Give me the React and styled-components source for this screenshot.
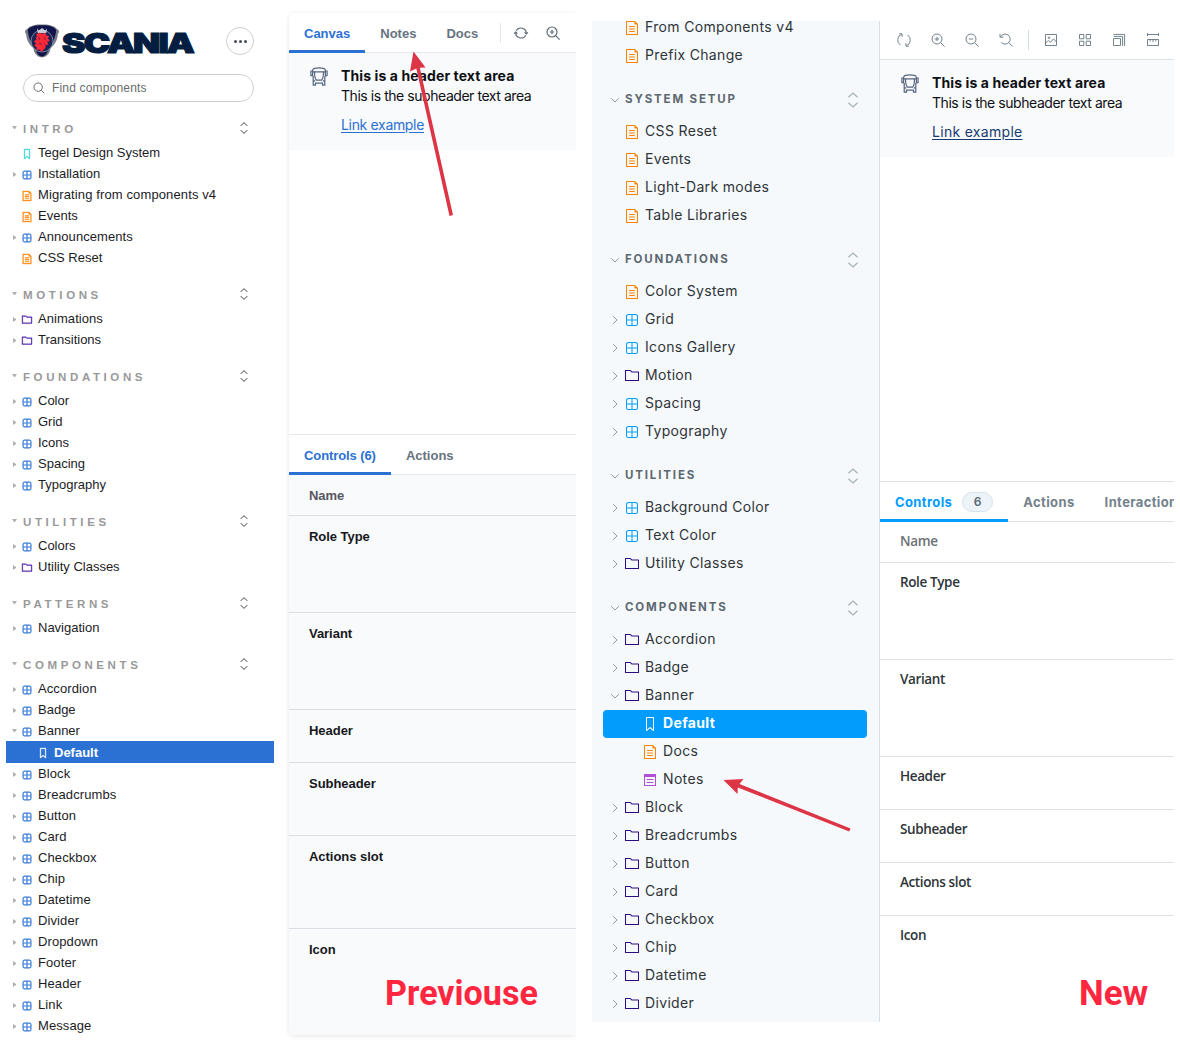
import React from "react";
import styled, { createGlobalStyle, css } from "styled-components";

const Global = createGlobalStyle`
  * { box-sizing: border-box; }
  body { margin: 0; background: #fff; }
`;

const helvetica = `"Liberation Sans", Arial, sans-serif`;
const grotesk = `Inter, "Liberation Sans", sans-serif`;
const humanist = `"Open Sans", "Noto Sans", sans-serif`;

/* ---------- page ---------- */
const Page = styled.main`
  position: relative;
  display: flex;
  width: 1180px;
  height: 1044px;
  overflow: hidden;
  background: #fff;
`;

/* ---------- icons ---------- */
const Glyph = styled.svg`
  display: block;
  flex: none;
  overflow: visible;
`;

const filled = {
  component:
    "M3.5 1.004a2.5 2.5 0 00-2.5 2.5v7a2.5 2.5 0 002.5 2.5h7a2.5 2.5 0 002.5-2.5v-7a2.5 2.5 0 00-2.5-2.5h-7zm8.5 5.5H7.5v-4.5h3a1.5 1.5 0 011.5 1.5v3zm0 1v3a1.5 1.5 0 01-1.5 1.5h-3v-4.5H12zm-5.5 4.5v-4.5H2v3a1.5 1.5 0 001.5 1.5h3zM2 6.504h4.5v-4.5h-3a1.5 1.5 0 00-1.5 1.5v3z",
  document:
    "M4 5.5a.5.5 0 01.5-.5h5a.5.5 0 010 1h-5a.5.5 0 01-.5-.5zM4.5 7.5a.5.5 0 000 1h5a.5.5 0 000-1h-5zM4 10.5a.5.5 0 01.5-.5h5a.5.5 0 010 1h-5a.5.5 0 01-.5-.5zM1.5 0a.5.5 0 00-.5.5v13a.5.5 0 00.5.5h11a.5.5 0 00.5-.5V3.207a.5.5 0 00-.146-.353L10.146.146A.5.5 0 009.793 0H1.5zM2 1h7.5v2a.5.5 0 00.5.5h2V13H2V1z",
  folder:
    "M6.586 3.504l-1.5-1.5H1v9h12v-7.5H6.586zm.414-1L5.793 1.297a1 1 0 00-.707-.293H.5a.5.5 0 00-.5.5v10a.5.5 0 00.5.5h13a.5.5 0 00.5-.5v-8.5a.5.5 0 00-.5-.5H7z",
  bookmark:
    "M3.5 0h7a.5.5 0 01.5.5v13a.5.5 0 01-.454.498.462.462 0 01-.371-.118L7 11.159l-3.175 2.72a.46.46 0 01-.379.118A.5.5 0 013 13.5V.5a.5.5 0 01.5-.5zM4 12.413l2.664-2.284a.454.454 0 01.377-.128.498.498 0 01.284.12L10 12.412V1H4v11.413z",
  notes:
    "M1.5 1a.5.5 0 00-.5.5v11a.5.5 0 00.5.5h11a.5.5 0 00.5-.5v-11a.5.5 0 00-.5-.5h-11zM2 4h10v8H2V4zM4 6h6a.5.5 0 010 1H4a.5.5 0 010-1zM4 9h6a.5.5 0 010 1H4a.5.5 0 010-1z",
};

const TreeIcon = ({ kind, size, color, weight = 0 }) => (
  <Glyph width={size} height={size} viewBox="0 0 14 14" fill={color} stroke={weight ? color : "none"} strokeWidth={weight}>
    <path fillRule="evenodd" d={filled[kind]} />
  </Glyph>
);

const stroked = {
  sync: (
    <>
      <path d="M2.2 4.800A5.400 5.400 0 0 1 12.300 7.600M11.800 9.200A5.400 5.400 0 0 1 1.700 6.400" />
      <path d="M.1 7.700 1.700 6l1.700 1.700M10.600 6.300 12.300 8l1.600-1.700" />
    </>
  ),
  remount: (
    <>
      <path d="M4.7 1.2A6.1 6.1 0 0 0 3.6 12.1M9.3 12.8A6.1 6.1 0 0 0 10.4 1.9" />
      <path d="M2.2.8h2.9v3.1M11.8 13.2H8.9v-3.1" />
    </>
  ),
  zoomIn: (
    <>
      <circle cx="6" cy="6" r="5" />
      <path d="m9.7 9.7 3.9 3.9M6 3.8v4.4M3.8 6h4.4" />
    </>
  ),
  zoomOut: (
    <>
      <circle cx="6" cy="6" r="5" />
      <path d="m9.7 9.7 3.9 3.9M3.8 6h4.4" />
    </>
  ),
  zoomReset: (
    <>
      <path d="M1.7 3.8A5 5 0 1 1 2.4 9.4M9.9 9.7l3.7 3.7" />
      <path d="M1 .8v3.4h3.4" />
    </>
  ),
  photo: (
    <>
      <path d="M1.5 1.5h11v11h-11zM1.5 10.2 4.3 7.4l2 2 3.2-3.5 3 3.1" />
      <circle cx="5" cy="4.7" r=".8" />
    </>
  ),
  grid: <path d="M1.5 1.5h4.3v4.3H1.5zM8.2 1.5h4.3v4.3H8.2zM1.5 8.2h4.3v4.3H1.5zM8.2 8.2h4.3v4.3H8.2z" />,
  grow: <path d="M1.5 5.5h7v7h-7zM1.5 3.4h9.1v9.6M1.5 1.4h11.1V13" />,
  measure: <path d="M1.5 0v3M12.5 0v3M1.5 1.5h11M1.5 6.5h11v6h-11zM4.2 6.5v1.9M7 6.5v2.6M9.8 6.5v1.9" />,
  search: (
    <>
      <circle cx="6" cy="6" r="4.9" />
      <path d="m9.6 9.6 3.6 3.6" />
    </>
  ),
  down: <path d="M3.2 5.2 7 9l3.8-3.8" />,
  right: <path d="M5.2 3.2 9 7l-3.8 3.8" />,
  expand: <path d="M3 4.6 7 .9l4 3.7M3 9.4l4 3.7 4-3.7" />,
};

const LineIcon = ({ kind, size = 14, color = "#73828c", weight = 1 }) => (
  <Glyph width={size} height={size} viewBox="0 0 14 14" fill="none" stroke={color} strokeWidth={weight}>
    {stroked[kind]}
  </Glyph>
);

const BusIcon = () => (
  <Glyph width="18" height="20" viewBox="0 0 18 20" fill="none" stroke="#56657f" strokeWidth="1.2">
    <path d="M2.600 9V3.400Q2.900 1.600 4.600 1.300 9 .6 13.400 1.300 15.100 1.600 15.400 3.400V9M2.600 4.800h12.800" />
    <path d="M2.600 4H.9v4.300l1.700.8M15.400 4h1.700v4.300l-1.700.8" />
    <path d="M4.500 4.800c0 5.200 1 7.700 2.100 8.400h4.800c1.100-.7 2.100-3.200 2.100-8.400" />
    <path d="M3.200 9v9.200h2.300v-2h7v2h2.300V9M3.200 13.600l2.100.6M14.800 13.600l-2.100.6" />
  </Glyph>
);

/* ---------- previous sidebar ---------- */
const OldSidebar = styled.aside`
  width: 289px;
  flex: none;
  padding: 24px 15px 0 6px;
  font-family: ${helvetica};
`;
const BrandRow = styled.header`
  display: flex;
  align-items: center;
  justify-content: space-between;
  height: 34px;
  padding: 0 20px 0 18px;
`;
const MenuButton = styled.button`
  display: flex;
  align-items: center;
  justify-content: center;
  gap: 2px;
  width: 28px;
  height: 28px;
  padding: 0;
  border: 1px solid #cfcfcf;
  border-radius: 50%;
  background: #fff;
`;
const Dot = styled.i`
  width: 3px;
  height: 3px;
  border-radius: 50%;
  background: #454b52;
`;
const SearchBox = styled.div`
  display: flex;
  align-items: center;
  gap: 7px;
  height: 28px;
  margin: 16px 20px 13px 17px;
  padding: 0 9px;
  border: 1px solid #cfcfcf;
  border-radius: 14px;
  color: #6b6b6b;
  font-size: 12px;
  letter-spacing: 0.18px;
`;
const OldHeading = styled.div`
  display: flex;
  align-items: center;
  height: 27px;
  margin-top: ${(p) => (p.$first ? 0 : 13)}px;
  padding: 0 24px 0 6px;
  color: #999;
  font-size: 11.5px;
  font-weight: 700;
  letter-spacing: 3.6px;
`;
const HeadingText = styled.span`
  flex: 1;
`;
const HeadingAction = styled.span`
  padding-bottom: 2px;
`;
const OldRow = styled.div`
  display: flex;
  align-items: center;
  height: ${(p) => (p.$active ? 22 : 21)}px;
  padding-left: ${(p) => (p.$active ? 32 : 6)}px;
  font-size: 13px;
  letter-spacing: ${(p) => p.$ls || 0}px;
  white-space: nowrap;
  color: #1b1c1f;
  ${(p) => p.$active && css`
    background: #2b71d4;
    color: #fff;
    font-weight: 700;
  `}
`;
const Caret = styled.span`
  width: 5px;
  height: 5px;
  margin-right: ${(p) => (p.$wide ? 6 : 5)}px;
  margin-top: ${(p) => (p.$wide ? 0 : 2)}px;
  ${(p) => p.$dir === "right" && css`
    border-left: 3px solid #b0b0b0;
    border-top: 2.5px solid transparent;
    border-bottom: 2.5px solid transparent;
    transform: translateX(1px);
  `}
  ${(p) => p.$dir === "down" && css`
    border-top: 3px solid #b0b0b0;
    border-left: 2.5px solid transparent;
    border-right: 2.5px solid transparent;
  `}
`;
const OldIconSlot = styled.span`
  display: flex;
  width: 10px;
  margin: 2px 6px 0 0;
`;

const oldTree = [
  ["INTRO", [
    ["Tegel Design System", "bookmark"],
    ["Installation", "component"],
    ["Migrating from components v4", "document", null, 0.12],
    ["Events", "document"],
    ["Announcements", "component", null, 0.06],
    ["CSS Reset", "document"],
  ]],
  ["MOTIONS", [["Animations", "folder", null, 0.06], ["Transitions", "folder"]]],
  ["FOUNDATIONS", ["Color", "Grid", "Icons", "Spacing", "Typography"].map((n) => [n, "component"])],
  ["UTILITIES", [["Colors", "component"], ["Utility Classes", "folder"]]],
  ["PATTERNS", [["Navigation", "component"]]],
  ["COMPONENTS", [
    ["Accordion", "component", null, 0.1],
    ["Badge", "component"],
    ["Banner", "component", "open"],
    ["Default", "bookmark", "active"],
    ...["Block", "Breadcrumbs", "Button", "Card", "Checkbox", "Chip", "Datetime", "Divider", "Dropdown", "Footer", "Header", "Link", "Message"].map((n) => [n, "component", null, 0.1]),
  ]],
];
const oldColors = { bookmark: "#37d5d3", component: "#2b71d4", document: "#ff8300", folder: "#4a1fa8" };

const OldItem = ({ item: [label, kind, state, spacing] }) => {
  const active = state === "active";
  const branch = kind === "component" || kind === "folder";
  return (
    <OldRow $active={active} $ls={spacing}>
      {!active && <Caret $dir={branch ? (state === "open" ? "down" : "right") : null} />}
      <OldIconSlot>
        <TreeIcon kind={kind} size={10} weight={0.5} color={active ? "#fff" : oldColors[kind]} />
      </OldIconSlot>
      {label}
    </OldRow>
  );
};

const Logo = () => (
  <Glyph width="170" height="34" viewBox="0 0 170 34">
    <path d="M18 .5C26 .3 31.500 2.500 33 5.200c2.200.4 2.600 3 .9 4.800-.4 6.500-3.400 11-7.400 14.300-.4 4.500-3 8.700-8.500 9.200-5.500-.5-8.100-4.700-8.500-9.200C5.500 21 2.500 16.500 2.100 10 .4 8.200.8 5.600 3 5.200 4.500 2.500 10 .3 18 .5Z" fill="#777b86" />
    <path d="M18 1.300c7.500-.1 12.500 1.900 14.200 4.700-.9 9-3.900 13.800-7.700 17.600C24 28 22 32.300 18 32.500S12 28 11.500 23.600C7.700 19.800 4.700 15 3.800 6 5.500 3.200 10.500 1.200 18 1.300Z" fill="#10154a" />
    <circle cx="18" cy="17" r="11" fill="#1c2458" stroke="#a6abba" strokeWidth=".7" />
    <path d="m13 4.600 1.900 1.900L18 4.100l3.100 2.400L23 4.600 22.300 9h-8.600Z" fill="#c9ccd6" />
    <path d="m12.200 10.600 3.200-2 2.600 1.500 3.400-1.500.6 2.700 3.200.6-1.300 2.400 2 2.800-2.600.6 1 3-2.500.2-.4 3-2.400 2.300-1.600 1.800-1.800-2.500-3.200.6.3-3-2.500-1.300 1.900-2.200-2.300-2.500 2.700-1-.9-2.700 1.500-.3Z" fill="#fb2838" />
    <path d="m14 13.300 2 1-1.300 1.900M21.300 12.700l-1.300 2 2 1.200M14.500 20l2.300-.8.7 2M21.500 20.300l-1.600-.8" fill="none" stroke="#6d1440" strokeWidth=".7" />
    <text x="38" y="28.800" fontFamily={grotesk} fontWeight="900" fontSize="27" letterSpacing="-1.400" textLength="131" lengthAdjust="spacingAndGlyphs" fill="#041e42" stroke="#041e42" strokeWidth="1.100">SCANIA</text>
  </Glyph>
);

/* ---------- shared preview + addons ---------- */
const OldPanel = styled.section`
  display: flex;
  flex-direction: column;
  flex: none;
  width: 287px;
  height: 1022px;
  margin-top: 13px;
  background: #fff;
  border-radius: 4px 0 0 4px;
  box-shadow: 0 1px 5px rgba(0, 0, 0, 0.1);
  clip-path: inset(-8px 0 -8px -8px);
`;
const Toolbar = styled.div`
  display: flex;
  align-items: center;
  height: ${(p) => p.$h}px;
  flex: none;
  border-bottom: 1px solid ${(p) => p.$line};
`;
const Tab = styled.div`
  display: flex;
  align-items: center;
  align-self: stretch;
  margin-bottom: -1px;
  padding: ${(p) => p.$pt || 3}px 15px 0;
  border-bottom: 3px solid ${(p) => (p.$active ? p.$accent : "transparent")};
  color: ${(p) => (p.$active ? p.$accent : p.$idle)};
  font-family: ${(p) => p.$font};
  font-size: 13px;
  font-weight: ${(p) => p.$weight || 700};
  letter-spacing: ${(p) => p.$ls || 0}px;
  white-space: nowrap;
`;
const Rule = styled.i`
  width: 1px;
  height: 20px;
  margin: ${(p) => p.$m};
  background: ${(p) => p.$c || "#e3e6ea"};
`;
const IconRow = styled.div`
  display: flex;
  align-items: center;
  gap: ${(p) => p.$gap}px;
  padding-left: ${(p) => p.$pl || 0}px;
`;
const Banner = styled.article`
  display: flex;
  gap: ${(p) => p.$gap}px;
  height: 97px;
  flex: none;
  padding: 14px 0 0 21px;
  background: #f9fafc;
  font-family: ${grotesk};
  color: #0d0f13;
`;
const BannerText = styled.div`
  display: flex;
  flex-direction: column;
  align-items: flex-start;
`;
const BannerTitle = styled.strong`
  font-size: 14px;
  line-height: 18px;
  font-weight: 700;
  letter-spacing: 0.1px;
  white-space: nowrap;
`;
const BannerSub = styled.span`
  font-size: 14px;
  line-height: 22px;
  letter-spacing: -0.45px;
  white-space: nowrap;
`;
const BannerLink = styled.a`
  margin-top: 9px;
  font-size: 14px;
  line-height: 18px;
  letter-spacing: ${(p) => p.$ls}px;
  color: ${(p) => p.$c};
  text-decoration: underline;
  text-underline-offset: 2px;
`;
const CanvasSpace = styled.div`
  height: ${(p) => p.$h}px;
  flex: none;
`;
const AddonBar = styled(Toolbar)`
  border-top: 1px solid ${(p) => p.$line};
`;
const ControlRow = styled.div`
  height: ${(p) => p.$h}px;
  flex: ${(p) => (p.$last ? "1" : "none")};
  padding: ${(p) => p.$pt || 13}px 0 0 20px;
  border-bottom: ${(p) => (p.$last ? "0" : `1px solid ${p.$line}`)};
  background: ${(p) => p.$bg};
  border-bottom-left-radius: ${(p) => (p.$last ? 4 : 0)}px;
  color: ${(p) => p.$c};
  font: ${(p) => p.$font};
  letter-spacing: ${(p) => p.$ls || 0}px;
`;

const BannerPreview = ({ gap, linkColor, linkSpacing }) => (
  <Banner $gap={gap}>
    <BusIcon />
    <BannerText>
      <BannerTitle>This is a header text area</BannerTitle>
      <BannerSub>This is the subheader text area</BannerSub>
      <BannerLink $c={linkColor} $ls={linkSpacing}>Link example</BannerLink>
    </BannerText>
  </Banner>
);

const Controls = ({ heights, ...style }) =>
  ["Name", "Role Type", "Variant", "Header", "Subheader", "Actions slot", "Icon"].map((n, i) => (
    <ControlRow
      key={n}
      $h={heights[i]}
      $last={i === 6}
      $pt={style.pt}
      $line={style.line}
      $bg={style.bg}
      $font={style.font}
      $ls={style.ls}
      $c={i === 0 ? style.muted : style.ink}
    >
      {n}
    </ControlRow>
  ));

/* ---------- new sidebar ---------- */
const NewSidebar = styled.aside`
  width: 288px;
  height: 1001px;
  flex: none;
  margin: 21px 0 0 16px;
  padding: 0 12px 0 11px;
  overflow: hidden;
  background: #f6f9fc;
  border-right: 1px solid #d5dde5;
  font-family: ${grotesk};
`;
const NewTree = styled.div`
  margin-top: -7px;
`;
const NewHeading = styled.div`
  display: flex;
  align-items: center;
  height: 28px;
  margin: 16px 0 4px;
  padding: 0 6px 0 5px;
  color: #5c6870;
  font-size: 11.5px;
  font-weight: 700;
  letter-spacing: 1.85px;
`;
const NewHeadingText = styled.span`
  flex: 1;
  padding: 0 0 3px 3px;
`;
const NewRow = styled.div`
  display: flex;
  align-items: center;
  height: 28px;
  padding-left: ${(p) => (p.$child ? 40 : 5)}px;
  border-radius: 4px;
  color: #2e3438;
  font-size: 14px;
  letter-spacing: 0.34px;
  white-space: nowrap;
  ${(p) => p.$active && css`
    background: #029cfd;
    color: #fff;
    font-weight: 700;
  `}
`;
const ChevronSlot = styled.span`
  display: flex;
  justify-content: center;
  width: 14px;
  margin-right: 3px;
`;
const NewLabel = styled.span`
  padding: 0 0 4px 6px;
`;

const folders = (names) => names.map((n) => [n, "folder"]);
const newTree = [
  [null, [["From Components v4", "document"], ["Prefix Change", "document"]]],
  ["SYSTEM SETUP", ["CSS Reset", "Events", "Light-Dark modes", "Table Libraries"].map((n) => [n, "document"])],
  ["FOUNDATIONS", [
    ["Color System", "document"],
    ["Grid", "component"],
    ["Icons Gallery", "component"],
    ["Motion", "folder"],
    ["Spacing", "component"],
    ["Typography", "component"],
  ]],
  ["UTILITIES", [["Background Color", "component"], ["Text Color", "component"], ["Utility Classes", "folder"]]],
  ["COMPONENTS", [
    ["Accordion", "folder"],
    ["Badge", "folder"],
    ["Banner", "folder", "open"],
    ["Default", "bookmark", "active"],
    ["Docs", "document", "child"],
    ["Notes", "notes", "child"],
    ...folders(["Block", "Breadcrumbs", "Button", "Card", "Checkbox", "Chip", "Datetime", "Divider"]),
  ]],
];
const newColors = { component: "#029cfd", document: "#ff8300", folder: "#2d0a86", notes: "#ae4fd6" };

const NewItem = ({ item: [label, kind, state] }) => {
  const active = state === "active";
  const child = active || state === "child";
  const branch = kind === "component" || kind === "folder";
  return (
    <NewRow $active={active} $child={child}>
      {!child && (
        <ChevronSlot>
          {branch && <LineIcon kind={state === "open" ? "down" : "right"} size={14} color="#8f9aa2" />}
        </ChevronSlot>
      )}
      <TreeIcon kind={kind} size={14} color={active ? "#fff" : newColors[kind]} />
      <NewLabel>{label}</NewLabel>
    </NewRow>
  );
};

/* ---------- new panel ---------- */
const NewPanel = styled.section`
  display: flex;
  flex-direction: column;
  flex: none;
  width: 294px;
  height: 1001px;
  margin-top: 21px;
  overflow: hidden;
`;
const CountBadge = styled.span`
  display: flex;
  align-items: center;
  justify-content: center;
  width: 31px;
  height: 20px;
  margin-left: 10px;
  border: 1px solid #d9e2ea;
  border-radius: 10px;
  background: #ecf3f9;
  color: #5c6870;
  font-size: 12px;
  font-weight: 600;
`;

/* ---------- annotations over the comparison ---------- */
const Arrows = styled.svg`
  position: absolute;
  left: 0;
  top: 0;
  pointer-events: none;
`;
const Caption = styled.strong`
  position: absolute;
  left: ${(p) => p.$x}px;
  top: ${(p) => p.$y}px;
  color: #ff2640;
  font: 700 35.5px/40px Roboto, sans-serif;
  white-space: nowrap;
  transform: scaleX(${(p) => p.$squeeze});
  transform-origin: left;
`;

export default function App() {
  const oldTab = { $accent: "#2b71d4", $idle: "#667380", $font: helvetica };
  const newTab = { $accent: "#029cfd", $idle: "#73828c", $font: grotesk, $ls: 0.38, $pt: 2 };
  return (
    <Page>
      <Global />
      <OldSidebar>
        <BrandRow>
          <Logo />
          <MenuButton aria-label="Shortcuts"><Dot /><Dot /><Dot /></MenuButton>
        </BrandRow>
        <SearchBox>
          <LineIcon kind="search" size={12} color="#555" />
          Find components
        </SearchBox>
        {oldTree.map(([title, items], i) => (
          <React.Fragment key={title}>
            <OldHeading $first={i === 0}>
              <Caret $dir="down" $wide />
              <HeadingText>{title}</HeadingText>
              <HeadingAction>
                <LineIcon kind="expand" size={12} color="#858585" weight={1.3} />
              </HeadingAction>
            </OldHeading>
            {items.map((it) => <OldItem key={it[0]} item={it} />)}
          </React.Fragment>
        ))}
      </OldSidebar>

      <OldPanel>
        <Toolbar $h={40} $line="#e6e8ec">
          <Tab $active {...oldTab}>Canvas</Tab>
          <Tab {...oldTab}>Notes</Tab>
          <Tab {...oldTab}>Docs</Tab>
          <Rule $m="0 0 0 7px" />
          <IconRow $gap={18} $pl={13}>
            <LineIcon kind="sync" color="#5f6c79" weight={1.2} />
            <LineIcon kind="zoomIn" color="#5f6c79" weight={1.2} />
          </IconRow>
        </Toolbar>
        <BannerPreview gap={13} linkColor="#2b70d3" linkSpacing={-0.33} />
        <CanvasSpace $h={284} />
        <AddonBar $h={41} $line="#e6e8ec">
          <Tab $active {...oldTab} $ls={-0.09}>Controls (6)</Tab>
          <Tab {...oldTab}>Actions</Tab>
        </AddonBar>
        <Controls
          heights={[41, 97, 97, 53, 73, 93, 100]}
          line="#d9dfe7"
          bg="#f9fafc"
          font={`700 13px/16px ${helvetica}`}
          ls={-0.04}
          muted="#56585b"
          ink="#16181b"
        />
      </OldPanel>

      <NewSidebar>
        <NewTree>
          {newTree.map(([title, items]) => (
            <React.Fragment key={title || "top"}>
              {title && (
                <NewHeading>
                  <LineIcon kind="down" color="#8f9aa2" />
                  <NewHeadingText>{title}</NewHeadingText>
                  <LineIcon kind="expand" size={16} color="#a5afb6" />
                </NewHeading>
              )}
              {items.map((it) => <NewItem key={it[0]} item={it} />)}
            </React.Fragment>
          ))}
        </NewTree>
      </NewSidebar>

      <NewPanel>
        <Toolbar $h={39} $line="#dde2e6">
          <IconRow $gap={20} $pl={17}>
            <LineIcon kind="remount" />
            <LineIcon kind="zoomIn" />
            <LineIcon kind="zoomOut" />
            <LineIcon kind="zoomReset" />
          </IconRow>
          <Rule $m="0 15px" $c="#d5dde5" />
          <IconRow $gap={20}>
            <LineIcon kind="photo" />
            <LineIcon kind="grid" />
            <LineIcon kind="grow" />
            <LineIcon kind="measure" />
          </IconRow>
        </Toolbar>
        <BannerPreview gap={13} linkColor="#173a70" linkSpacing={0.3} />
        <CanvasSpace $h={324} />
        <AddonBar $h={41} $line="#dde2e6">
          <Tab $active {...newTab}>Controls<CountBadge>6</CountBadge></Tab>
          <Tab {...newTab}>Actions</Tab>
          <Tab {...newTab}>Interactions</Tab>
        </AddonBar>
        <Controls
          heights={[41, 97, 97, 53, 53, 53, 100]}
          line="#dde2e6"
          bg="#fff"
          font={`600 13.5px/16px ${humanist}`}
          ls={-0.38}
          pt={11}
          muted="#6c7075"
          ink="#2e3438"
        />
      </NewPanel>

      <Arrows width="1180" height="1044" viewBox="0 0 1180 1044" fill="#dc3545">
        <path d="M413.500 51.500 425.500 67.500 419.800 67.700 453 215 449.500 216 416.300 68.500 410 71.500Z" />
        <path d="M723.500 780 743.500 779 739.500 784 850.500 828.500 849.200 831.500 737.800 787.500 737.500 794Z" />
      </Arrows>
      <Caption $x={385} $y={973} $squeeze={0.96}>Previouse</Caption>
      <Caption $x={1079} $y={973} $squeeze={0.985}>New</Caption>
    </Page>
  );
}
